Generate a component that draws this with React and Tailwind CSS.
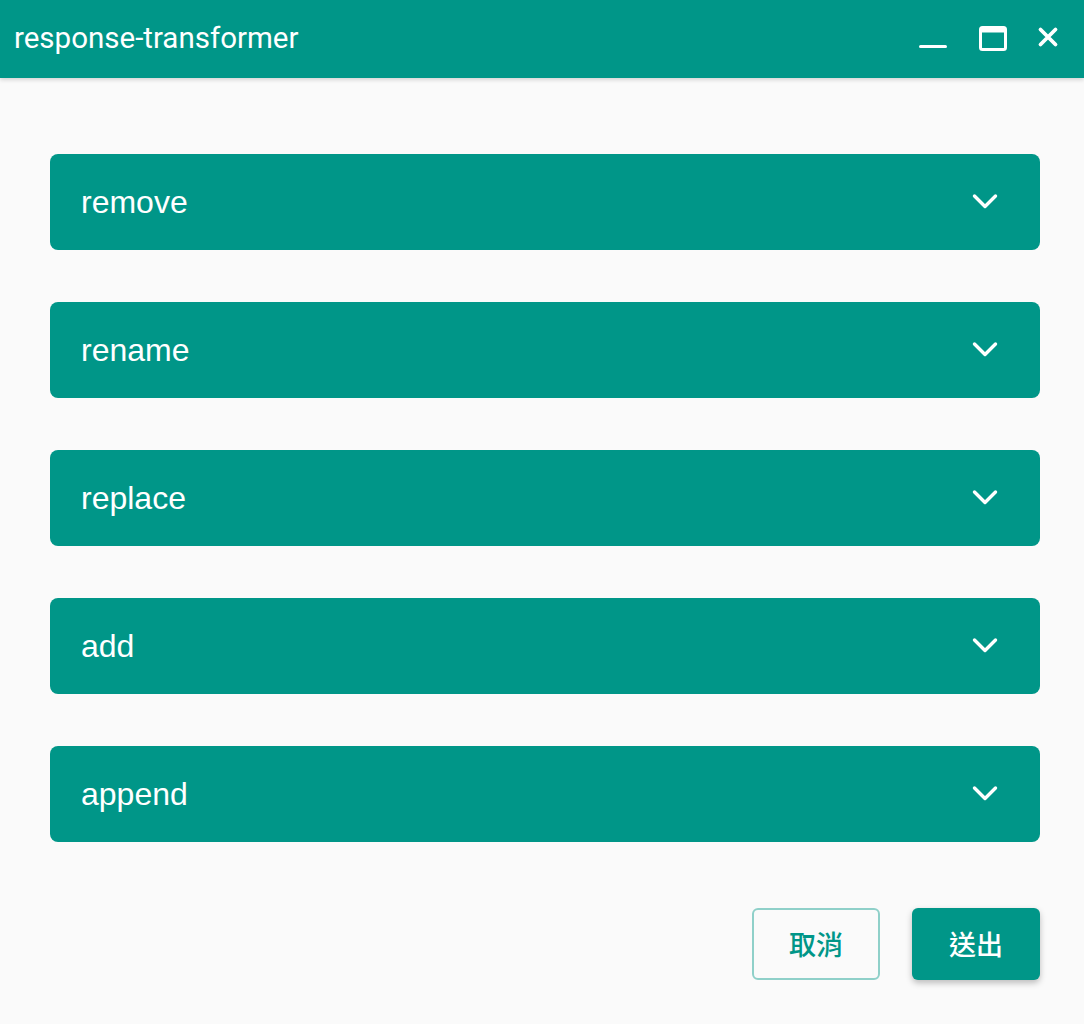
import React, { useState } from "react";

const sections = ["remove", "rename", "replace", "add", "append"];

function Chevron() {
  return (
    <svg width="26" height="18" viewBox="0 0 26 18" fill="none">
      <path d="M2.5 3l10.5 10.5L23.5 3" stroke="white" strokeWidth="3.4" strokeLinecap="round" strokeLinejoin="round" />
    </svg>
  );
}

export default function App() {
  const [open, setOpen] = useState(null);

  return (
    <div className="w-[1084px] h-[1024px] bg-[#fafafa] flex flex-col font-['Liberation_Sans',sans-serif]">
      {/* title bar */}
      <div className="h-[78px] bg-[#009688] flex items-center justify-between pl-[14px] pr-[24px] shadow-[0_2px_4px_rgba(0,0,0,0.15)] relative z-10">
        <h1 className="text-white text-[29.5px] font-['Roboto',sans-serif] mt-[-2px]">
          response-transformer
        </h1>
        <div className="flex items-center">
          <svg width="30" height="30" viewBox="0 0 30 30" className="mr-[30px]">
            <rect x="1" y="21" width="28" height="3" rx="1.5" fill="white" />
          </svg>
          <svg width="30" height="30" viewBox="0 0 30 30" className="mr-[28px]">
            <rect x="2.5" y="3.5" width="25" height="22" rx="2" fill="none" stroke="white" strokeWidth="3" />
            <rect x="2.5" y="3.5" width="25" height="5" fill="white" />
          </svg>
          <svg width="24" height="24" viewBox="0 0 24 24" className="mt-[-4px]">
            <path d="M4.5 4.5l15 15M19.5 4.5l-15 15" stroke="white" strokeWidth="3.8" strokeLinecap="round" />
          </svg>
        </div>
      </div>

      {/* sections */}
      <div className="flex flex-col gap-[52px] pl-[50px] pr-[44px] pt-[76px]">
        {sections.map((name, i) => (
          <button
            key={name}
            onClick={() => setOpen(open === i ? null : i)}
            className="h-[96px] w-full bg-[#009688] rounded-[8px] flex items-center justify-between pl-[31px] pr-[42px] text-white text-[32px]"
          >
            <span>{name}</span>
            <Chevron />
          </button>
        ))}
      </div>

      {/* actions */}
      <div className="flex justify-end gap-[32px] px-[44px] pt-[66px] font-['Noto_Sans_CJK_TC','Noto_Sans_CJK_SC',sans-serif]">
        <button className="w-[128px] h-[72px] rounded-[6px] border-2 border-[#8fd0c9] text-[#009688] text-[27px] font-medium bg-transparent">
          取消
        </button>
        <button className="w-[128px] h-[72px] rounded-[6px] bg-[#009688] text-white text-[27px] font-medium shadow-[0_3px_6px_rgba(0,0,0,0.25)]">
          送出
        </button>
      </div>
    </div>
  );
}
